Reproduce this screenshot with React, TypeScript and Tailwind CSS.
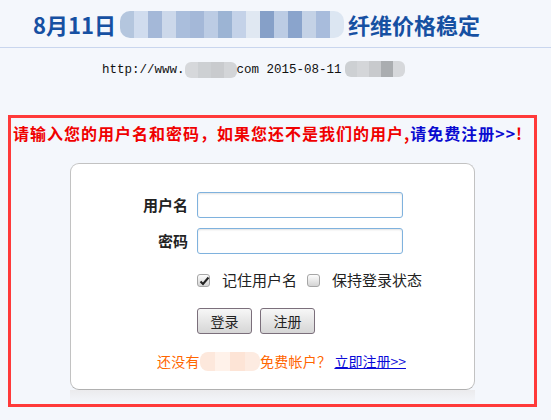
const titleBlocks = [
  "#b4c6de", "#d0dcee", "#a4b8d8", "#ccd8ea", "#aabedc", "#a4b8d8", "#bccce4", "#9cb4d4",
  "#c4d2e8", "#e0e8f2", "#86a0c8", "#bccce4", "#8aa4cc", "#c4d2e6", "#a8bcdc", "#dce6f2",
];

const Mosaic = ({ colors, w, h, rounded }: { colors: string[]; w: number; h: number; rounded: string }) => (
  <span className={`inline-flex overflow-hidden align-middle ${rounded}`}>
    {colors.map((c, i) => (
      <span key={i} style={{ background: c, width: w, height: h }} />
    ))}
  </span>
);

const CheckBox = ({ checked }: { checked?: boolean }) => (
  <span className="relative flex h-[13px] w-[13px] items-center justify-center rounded-[3px] border border-[#a6a6a6] bg-gradient-to-b from-[#fdfdfd] to-[#d4d4d4]">
    {checked && (
      <svg width="11" height="10" viewBox="0 0 11 10" className="absolute left-[1px] top-[1px]">
        <path d="M1.5 5.5 L4 8 L9.5 1.5" stroke="#222" strokeWidth="2" fill="none" />
      </svg>
    )}
  </span>
);

const Button = ({ label }: { label: string }) => (
  <button className="flex h-[26px] w-[55px] items-center justify-center rounded-[3px] border border-[#7b6f7b] bg-gradient-to-b from-[#f7f7f7] to-[#d6d6d6] text-[14px] text-[#222]">
    {label}
  </button>
);

export default function App() {
  return (
    <div className="h-[420px] w-[551px] overflow-hidden bg-[#f4f7fc] font-['Noto_Sans_CJK_SC',sans-serif]">
      <div className="flex h-[48px] items-center border-b border-[#c9d6ee] pl-[33px] text-[22px] font-bold leading-none text-[#1650a2]">
        <span>8月11日</span>
        <span className="mx-[4px]">
          <Mosaic colors={titleBlocks} w={14} h={27} rounded="rounded-[10px]" />
        </span>
        <span>纤维价格稳定</span>
      </div>

      <div className="mt-[14px] flex h-[16px] items-center pl-[102px] font-['Liberation_Mono',monospace] text-[12.5px] text-[#111]">
        <span>http://www.</span>
        <Mosaic colors={["#d6d8db", "#cdd0d3", "#c9cbce", "#d3d5d8"]} w={13} h={16} rounded="rounded-[6px]" />
        <span>com 2015-08-11</span>
        <span className="ml-[3px]">
          <Mosaic colors={["#cdd0d3", "#d4d6d9", "#c8cacd", "#aaadb0", "#d6d8db"]} w={12} h={16} rounded="rounded-[6px]" />
        </span>
      </div>

      <div className="ml-[8px] mt-[37px] h-[292px] w-[529px] border-[3px] border-[#ff3a3a]">
        <div className="whitespace-nowrap pl-[2px] pt-[5px] text-[16px] font-bold leading-[20px] tracking-[1px] text-[#f00000]">
          请输入您的用户名和密码，如果您还不是我们的用户,
          <span className="text-[#0a0ad0]">请免费注册&gt;&gt;</span>!
        </div>

        <div className="ml-[59px] mt-[20px] w-[405px]">
          <div className="h-[227px] rounded-[9px] border border-[#c2c2c2] border-b-[#b0b0b0] bg-white">
            <div className="mt-[28px] grid grid-cols-[117px_206px] items-center gap-x-[9px] gap-y-[10px]">
              <span className="text-right text-[15px] font-bold text-[#222]">用户名</span>
              <div className="h-[26px] rounded-[3px] border border-[#7fb2de] shadow-[inset_0_1px_2px_rgba(0,0,0,0.12)]" />
              <span className="text-right text-[15px] font-bold text-[#222]">密码</span>
              <div className="h-[26px] rounded-[3px] border border-[#7fb2de] shadow-[inset_0_1px_2px_rgba(0,0,0,0.12)]" />
            </div>

            <div className="mt-[17px] flex h-[18px] items-center pl-[126px] text-[15px] text-[#222]">
              <CheckBox checked />
              <span className="ml-[12px]">记住用户名</span>
              <span className="ml-[10px]">
                <CheckBox />
              </span>
              <span className="ml-[12px]">保持登录状态</span>
            </div>

            <div className="mt-[19px] flex gap-[8px] pl-[126px]">
              <Button label="登录" />
              <Button label="注册" />
            </div>

            <div className="mt-[18px] flex h-[18px] items-center pl-[86px] text-[14px] text-[#ff6600]">
              <span className="tracking-[0.3px]">还没有</span>
              <Mosaic colors={["#fde8dc", "#fff2ea", "#fde4d6", "#fdebe1"]} w={15} h={19} rounded="rounded-[8px]" />
              <span className="tracking-[0.3px]">免费帐户？</span>
              <span className="ml-[3px] text-[#0a0ad8] underline">立即注册&gt;&gt;</span>
            </div>
          </div>
          <div className="h-[14px] bg-gradient-to-b from-[#ebebed] to-[#f4f7fc]" />
        </div>
      </div>
    </div>
  );
}
